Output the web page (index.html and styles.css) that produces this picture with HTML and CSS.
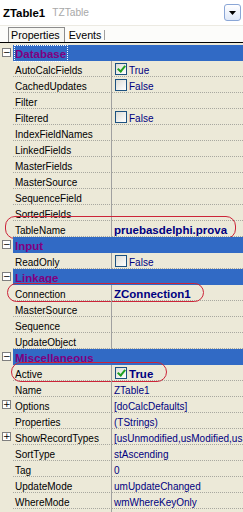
FILE: index.html
```html
<!DOCTYPE html>
<html lang="en">
<head>
    <meta charset="UTF-8">
    <meta name="viewport" content="width=device-width, initial-scale=1.0">
    <title>Object Inspector - ZTable1</title>
    <link rel="stylesheet" href="styles.css">
</head>
<body>
    <div class="inspector">
        <div class="combo">
            <span class="obj-name">ZTable1</span>
            <span class="obj-type">TZTable</span>
            <span class="drop-btn">
                <svg width="7" height="4" viewBox="0 0 7 4"><path d="M0 0h7L3.5 4z" fill="#000"/></svg>
            </span>
        </div>

        <div class="tabs">
            <span class="tab active">Properties</span>
            <span class="tab">Events</span>
        </div>

        <div class="grid">
            <div class="row cat">
                <span class="gutter"><span class="toggle">&minus;</span></span>
                <span class="cat-name"><span class="focus">Database</span></span>
            </div>
            <div class="row"><span class="gutter"></span><span class="name">AutoCalcFields</span><span class="value"><span class="check on"></span>True</span></div>
            <div class="row"><span class="gutter"></span><span class="name">CachedUpdates</span><span class="value"><span class="check"></span>False</span></div>
            <div class="row"><span class="gutter"></span><span class="name">Filter</span><span class="value"></span></div>
            <div class="row"><span class="gutter"></span><span class="name">Filtered</span><span class="value"><span class="check"></span>False</span></div>
            <div class="row"><span class="gutter"></span><span class="name">IndexFieldNames</span><span class="value"></span></div>
            <div class="row"><span class="gutter"></span><span class="name">LinkedFields</span><span class="value"></span></div>
            <div class="row"><span class="gutter"></span><span class="name">MasterFields</span><span class="value"></span></div>
            <div class="row"><span class="gutter"></span><span class="name">MasterSource</span><span class="value"></span></div>
            <div class="row"><span class="gutter"></span><span class="name">SequenceField</span><span class="value"></span></div>
            <div class="row"><span class="gutter"></span><span class="name">SortedFields</span><span class="value"></span></div>
            <div class="row"><span class="gutter"></span><span class="name">TableName</span><span class="value bold">pruebasdelphi.prova</span><span class="mark mark-table"></span></div>

            <div class="row cat">
                <span class="gutter"><span class="toggle">&minus;</span></span>
                <span class="cat-name">Input</span>
            </div>
            <div class="row"><span class="gutter"></span><span class="name">ReadOnly</span><span class="value"><span class="check"></span>False</span></div>

            <div class="row cat">
                <span class="gutter"><span class="toggle">&minus;</span></span>
                <span class="cat-name">Linkage</span>
            </div>
            <div class="row"><span class="gutter"></span><span class="name">Connection</span><span class="value bold">ZConnection1</span><span class="mark mark-conn"></span></div>
            <div class="row"><span class="gutter"></span><span class="name">MasterSource</span><span class="value"></span></div>
            <div class="row"><span class="gutter"></span><span class="name">Sequence</span><span class="value"></span></div>
            <div class="row"><span class="gutter"></span><span class="name">UpdateObject</span><span class="value"></span></div>

            <div class="row cat">
                <span class="gutter"><span class="toggle">&minus;</span></span>
                <span class="cat-name">Miscellaneous</span>
            </div>
            <div class="row"><span class="gutter"></span><span class="name">Active</span><span class="value bold"><span class="check on"></span>True</span><span class="mark mark-active"></span></div>
            <div class="row"><span class="gutter"></span><span class="name">Name</span><span class="value">ZTable1</span></div>
            <div class="row"><span class="gutter"><span class="toggle">+</span></span><span class="name">Options</span><span class="value">[doCalcDefaults]</span></div>
            <div class="row"><span class="gutter"></span><span class="name">Properties</span><span class="value">(TStrings)</span></div>
            <div class="row"><span class="gutter"><span class="toggle">+</span></span><span class="name">ShowRecordTypes</span><span class="value">[usUnmodified,usModified,usInserted]</span></div>
            <div class="row"><span class="gutter"></span><span class="name">SortType</span><span class="value">stAscending</span></div>
            <div class="row"><span class="gutter"></span><span class="name">Tag</span><span class="value">0</span></div>
            <div class="row"><span class="gutter"></span><span class="name">UpdateMode</span><span class="value">umUpdateChanged</span></div>
            <div class="row"><span class="gutter"></span><span class="name">WhereMode</span><span class="value">wmWhereKeyOnly</span></div>
            <div class="row"><span class="gutter"></span><span class="name"></span><span class="value"></span></div>
        </div>
    </div>
</body>
</html>
```

FILE: styles.css
```css
body {
    margin: 0;
    background-color: #ece9d8;
    font-family: "Liberation Sans", Arial, sans-serif;
    font-size: 10px;
    overflow: hidden;
}

.inspector {
    width: 243px;
    height: 512px;
    overflow: hidden;
}

/* caixa de selecao do objeto */
.combo {
    height: 25px;
    background-color: #ffffff;
    display: flex;
    align-items: center;
    padding-left: 3px;
    box-sizing: border-box;
}

.obj-name {
    font-weight: bold;
    font-size: 11.4px;
    color: #000000;
}

.obj-type {
    color: #a8a8a8;
    margin-left: 7px;
    font-size: 10.2px;
}

.drop-btn {
    margin-left: auto;
    margin-right: 2px;
    width: 15px;
    height: 15px;
    border: 1px solid #8aa6d6;
    border-radius: 3px;
    background: linear-gradient(#ffffff, #dfe8f8);
    display: flex;
    align-items: center;
    justify-content: center;
}

/* abas */
.tabs {
    height: 16px;
    background-color: #fcfcfa;
    border-top: 1px solid #eceae2;
    border-bottom: 1px solid #000000;
    display: flex;
    align-items: flex-end;
    padding-left: 8px;
}

.tab {
    font-size: 10.7px;
    height: 14px;
    line-height: 14px;
    padding: 0 4px 0 2px;
    color: #000000;
}

.tab.active {
    border: 1px solid #8c8c8c;
    border-bottom: none;
    background-color: #f7f7f3;
}

.tab + .tab {
    padding-left: 4px;
    padding-right: 3px;
    border-right: 1px solid #a0a0a0;
    height: 10px;
    line-height: 10px;
    margin-bottom: 2px;
}

/* grade de propriedades */
.grid {
    margin-top: 2px;
}

.row {
    display: flex;
    height: 16px;
    position: relative;
}

.gutter {
    width: 13px;
    flex: none;
    position: relative;
}

.toggle {
    position: absolute;
    left: 2px;
    top: 3px;
    width: 7px;
    height: 7px;
    border: 1px solid #7f7f7f;
    background-color: #ffffff;
    font-size: 9px;
    line-height: 7px;
    text-align: center;
    color: #000000;
    font-family: "DejaVu Sans", sans-serif;
}

.name {
    width: 96px;
    height: 11px;
    flex: none;
    padding: 4px 0 0 2px;
    border-right: 1px solid #a0a0a0;
    border-bottom: 1px dotted #a8a8a0;
    line-height: 11px;
    color: #000000;
    white-space: nowrap;
    overflow: hidden;
}

.value {
    flex: 1;
    height: 11px;
    padding: 4px 0 0 2px;
    border-bottom: 1px dotted #a8a8a0;
    line-height: 11px;
    color: #000080;
    white-space: nowrap;
    overflow: hidden;
    position: relative;
}

.value.bold {
    font-weight: bold;
    font-size: 11.5px;
}

.check {
    display: inline-block;
    vertical-align: top;
    width: 10px;
    height: 10px;
    margin: -2px 2px 0 1px;
    border: 1px solid #1c5180;
    background: linear-gradient(135deg, #dcdcd6, #ffffff);
    position: relative;
}

.check.on::after {
    content: "";
    position: absolute;
    left: 3px;
    top: 0;
    width: 3px;
    height: 6px;
    border: solid #21a121;
    border-width: 0 2px 2px 0;
    transform: rotate(40deg);
}

/* cabecalhos de categoria */
.row.cat .cat-name {
    flex: 1;
    background-color: #316ac5;
    color: #800080;
    font-weight: bold;
    font-size: 11.5px;
    line-height: 11px;
    padding: 4px 0 0 2px;
    border-bottom: 1px solid #316ac5;
}

.focus {
    display: inline-block;
    margin-top: -4px;
    padding: 3px 1px 0 0;
    height: 12px;
    outline: 1px dotted #ffffff;
}

/* marcas vermelhas desenhadas por cima */
.mark {
    position: absolute;
    border: 1px solid #cc2438;
    border-radius: 10px;
    pointer-events: none;
}

.mark-table {
    left: 5px;
    top: -5px;
    width: 229px;
    height: 21px;
}

.mark-conn {
    left: 7px;
    top: -2px;
    width: 195px;
    height: 17px;
}

.mark-active {
    left: 11px;
    top: -3px;
    width: 154px;
    height: 18px;
}
```
